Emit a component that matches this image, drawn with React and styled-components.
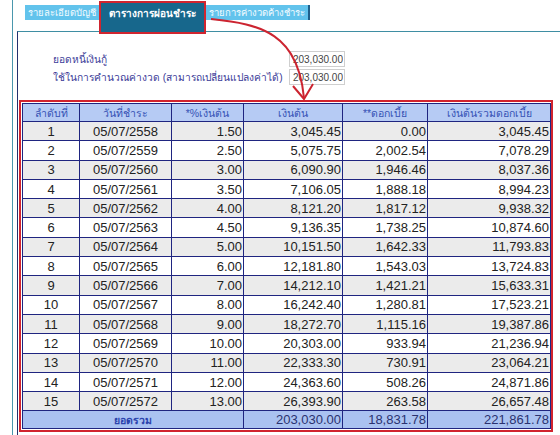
import React from "react";
import styled, { createGlobalStyle } from "styled-components";

const rows = [
  ["1", "05/07/2558", "1.50", "3,045.45", "0.00", "3,045.45"],
  ["2", "05/07/2559", "2.50", "5,075.75", "2,002.54", "7,078.29"],
  ["3", "05/07/2560", "3.00", "6,090.90", "1,946.46", "8,037.36"],
  ["4", "05/07/2561", "3.50", "7,106.05", "1,888.18", "8,994.23"],
  ["5", "05/07/2562", "4.00", "8,121.20", "1,817.12", "9,938.32"],
  ["6", "05/07/2563", "4.50", "9,136.35", "1,738.25", "10,874.60"],
  ["7", "05/07/2564", "5.00", "10,151.50", "1,642.33", "11,793.83"],
  ["8", "05/07/2565", "6.00", "12,181.80", "1,543.03", "13,724.83"],
  ["9", "05/07/2566", "7.00", "14,212.10", "1,421.21", "15,633.31"],
  ["10", "05/07/2567", "8.00", "16,242.40", "1,280.81", "17,523.21"],
  ["11", "05/07/2568", "9.00", "18,272.70", "1,115.16", "19,387.86"],
  ["12", "05/07/2569", "10.00", "20,303.00", "933.94", "21,236.94"],
  ["13", "05/07/2570", "11.00", "22,333.30", "730.91", "23,064.21"],
  ["14", "05/07/2571", "12.00", "24,363.60", "508.26", "24,871.86"],
  ["15", "05/07/2572", "13.00", "26,393.90", "263.58", "26,657.48"],
];

const colWidths = [57, 92, 72, 99, 85, 123];

const App = () => {
  return (
    <>
      <GlobalStyle />
      <Page>
        <Frame>
          <TabBar>
            <Tab>รายละเอียดบัญชี</Tab>
            <Tab active>ตารางการผ่อนชำระ</Tab>
            <Tab last>รายการค่างวดค้างชำระ</Tab>
          </TabBar>
          <Panel>
            <Form>
              <Label>ยอดหนี้เงินกู้</Label>
              <Field value="203,030.00" readOnly />
              <Label>ใช้ในการคำนวณค่างวด (สามารถเปลี่ยนแปลงค่าได้)</Label>
              <Field value="203,030.00" readOnly />
            </Form>

            <Highlight>
              <Table>
                <colgroup>
                  {colWidths.map((w, i) => (
                    <col key={i} style={{ width: w }} />
                  ))}
                </colgroup>
                <thead>
                  <tr>
                    <Th>ลำดับที่</Th>
                    <Th>วันที่ชำระ</Th>
                    <Th>*%เงินต้น</Th>
                    <Th>เงินต้น</Th>
                    <Th>**ดอกเบี้ย</Th>
                    <Th>เงินต้นรวมดอกเบี้ย</Th>
                  </tr>
                </thead>
                <tbody>
                  {rows.map((r, i) => (
                    <Tr key={r[0]} odd={i % 2 === 0}>
                      <Td align="center">{r[0]}</Td>
                      <Td align="center">{r[1]}</Td>
                      <Td>{r[2]}</Td>
                      <Td>{r[3]}</Td>
                      <Td>{r[4]}</Td>
                      <Td>{r[5]}</Td>
                    </Tr>
                  ))}
                </tbody>
                <tfoot>
                  <tr>
                    <TotalLabel colSpan={3}>ยอดรวม</TotalLabel>
                    <TotalCell>203,030.00</TotalCell>
                    <TotalCell>18,831.78</TotalCell>
                    <TotalCell>221,861.78</TotalCell>
                  </tr>
                </tfoot>
              </Table>
            </Highlight>

            <Note>
              * ใช้เป็นข้อมูลประกอบการพิจารณาเบื้องต้นเท่านั้น ยอดที่ต้องชำระจริงอาจเปลี่ยนแปลงได้
            </Note>
          </Panel>
        </Frame>

        {/* red annotation arrow from the active tab down to the table */}
        <Arrow viewBox="0 0 560 435">
          <path
            d="M211 19 C 262 24, 298 34, 304 98"
            fill="none"
            stroke="#cc2430"
            strokeWidth="2"
          />
          <path
            d="M293 86 L304 99 L313 84"
            fill="none"
            stroke="#cc2430"
            strokeWidth="2"
          />
        </Arrow>
      </Page>
    </>
  );
};

export default App;

const GlobalStyle = createGlobalStyle`
  html, body {
    margin: 0;
    padding: 0;
    background: #ffffff;
  }
  body {
    font-family: Tahoma, "Liberation Sans", "Noto Sans", sans-serif;
    overflow: hidden;
  }
`;

const Page = styled.div`
  position: relative;
  width: 560px;
  height: 435px;
  padding-left: 12px;
  box-sizing: border-box;
  overflow: hidden;
`;

const Frame = styled.div`
  height: 100%;
  border-left: 1px solid #4a97ad;
  padding-left: 4px;
`;

const TabBar = styled.div`
  display: flex;
  align-items: flex-start;
  height: 31px;
  padding-left: 8px;
`;

const Tab = styled.div`
  box-sizing: border-box;
  font-size: ${({ active }) => (active ? "10px" : "9.5px")};
  white-space: nowrap;
  color: ${({ active }) => (active ? "#ffffff" : "#f2fbff")};
  font-weight: ${({ active }) => (active ? 700 : 400)};
  background: ${({ active }) => (active ? "#17678c" : "#62c3ec")};
  margin-top: ${({ active }) => (active ? "1px" : "5px")};
  height: ${({ active }) => (active ? "33px" : "15px")};
  line-height: ${({ active }) => (active ? "22px" : "15px")};
  padding: ${({ active }) => (active ? "0 8px" : "0 3px")};
  border: ${({ active }) => (active ? "2px solid #d0252f" : "none")};
  border-right: ${({ last, active }) =>
    active ? "2px solid #d0252f" : last ? "2px solid #1f5f8a" : "none"};
  position: relative;
  z-index: ${({ active }) => (active ? 1 : 0)};
`;

const Panel = styled.div`
  border-left: 1px solid #23306e;
  border-top: 1px solid #3f8ea3;
  padding-top: 18px;
  height: 100%;
`;

const Form = styled.div`
  display: grid;
  grid-template-columns: 236px 56px;
  grid-auto-rows: 18px;
  align-items: center;
  padding-left: 35px;
`;

const Label = styled.div`
  font-size: 10.2px;
  color: #3b3b98;
  white-space: nowrap;
`;

const Field = styled.input`
  box-sizing: border-box;
  width: 56px;
  height: 16px;
  border: 1px solid #cfcfcf;
  padding: 0 1px;
  font-family: "Liberation Sans", Arial, sans-serif;
  font-size: 10px;
  color: #444;
  text-align: right;
  background: #fff;
  outline: none;
`;

const Highlight = styled.div`
  margin-top: 14px;
  margin-left: 1px;
  width: 534px;
  box-sizing: border-box;
  border: 2px solid #d1232e;
  padding: 1px;
`;

const Table = styled.table`
  width: 528px;
  border-collapse: collapse;
  table-layout: fixed;
  font-family: "Liberation Sans", Arial, sans-serif;
`;

const Th = styled.th`
  height: 17px;
  padding: 0;
  background: #b6cbf4;
  border: 1px solid #1f2580;
  color: #3552b4;
  font-family: Tahoma, "Liberation Sans", sans-serif;
  font-size: 10.5px;
  font-weight: 400;
  text-align: center;
  line-height: 14px;
`;

const Tr = styled.tr`
  height: 19.3px;
  background: ${({ odd }) => (odd ? "#ebebeb" : "#ffffff")};
`;

const Td = styled.td`
  padding: 0 1px;
  border: 1px solid #1f2580;
  font-size: 13px;
  color: #222;
  text-align: ${({ align }) => align || "right"};
  line-height: 15px;
`;

const TotalLabel = styled.td`
  height: 17px;
  padding: 0;
  background: #aac2f1;
  border: 1px solid #1f2580;
  color: #2c43ad;
  font-family: Tahoma, "Liberation Sans", sans-serif;
  font-size: 10.5px;
  font-weight: 700;
  text-align: center;
  line-height: 14px;
`;

const TotalCell = styled.td`
  padding: 0 1px;
  background: #aac2f1;
  border: 1px solid #1f2580;
  color: #2b3270;
  font-size: 13px;
  text-align: right;
  line-height: 15px;
`;

const Note = styled.div`
  margin-top: 3px;
  padding-left: 55px;
  font-size: 11px;
  color: #d42a2a;
  white-space: nowrap;
`;

const Arrow = styled.svg`
  position: absolute;
  left: 0;
  top: 0;
  width: 560px;
  height: 435px;
  pointer-events: none;
  z-index: 2;
`;
